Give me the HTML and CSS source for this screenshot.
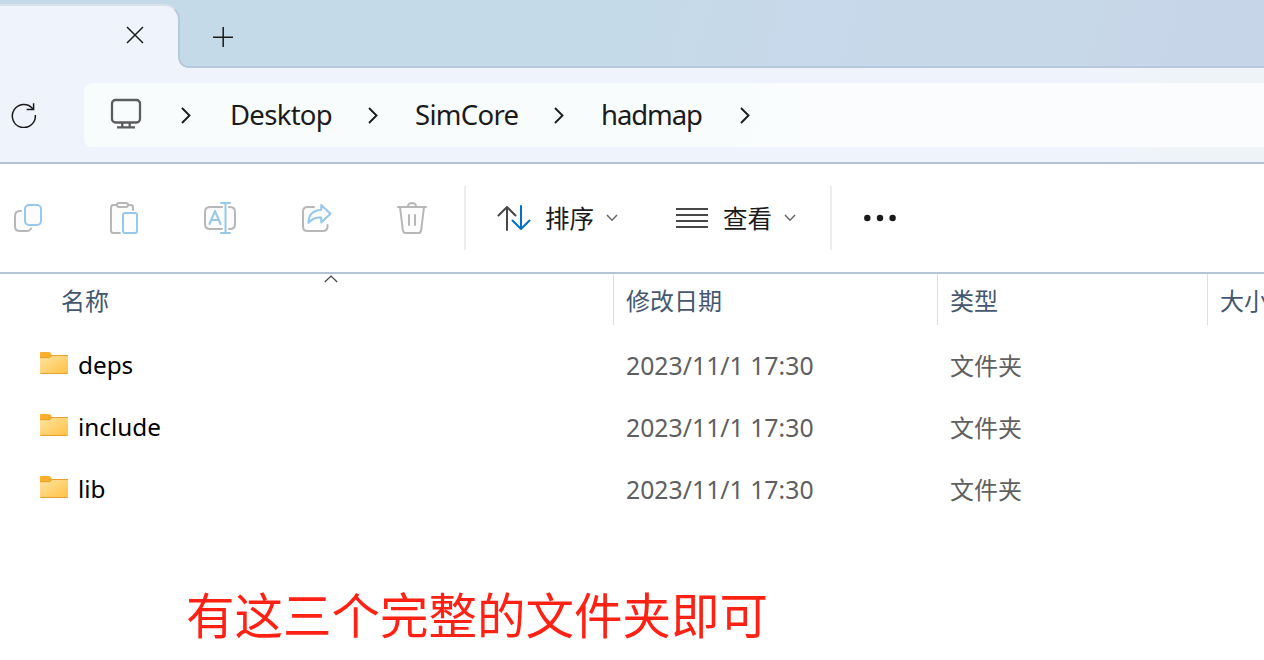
FILE: index.html
```html
<!DOCTYPE html>
<html lang="zh-CN">
<head>
<meta charset="utf-8">
<title>hadmap</title>
<link rel="stylesheet" href="styles.css">
</head>
<body>
<div class="window">
  <header class="tabs">
    <div class="tab">
      <svg class="tab-close" width="18" height="18" viewBox="0 0 18 18"><path d="M1 1 17 17M17 1 1 17"/></svg>
    </div>
    <div class="tabs-rest">
      <svg class="tab-new" width="20" height="20" viewBox="0 0 20 20"><path d="M0 10.2H20M10.2 0V20"/></svg>
    </div>
  </header>

  <nav class="nav">
    <svg class="refresh" width="26" height="26" viewBox="0 0 26 26"><path d="M24.3 13A11.5 11.5 0 1 1 21.7 6.7M22.6 1.2V7.6H15.6"/></svg>
    <div class="address">
      <svg class="monitor" width="32" height="32" viewBox="0 0 32 32"><rect x="2" y="2" width="28" height="22.5" rx="3.5"/><path d="M12.3 25V29M19.7 25V29M7 29.3H25"/></svg>
      <svg class="sep sep-first" width="10" height="17" viewBox="0 0 10 17"><path d="M1 1 8.5 8.5 1 16"/></svg>
      <span class="crumb crumb-desktop">Desktop</span>
      <svg class="sep" width="10" height="17" viewBox="0 0 10 17"><path d="M1 1 8.5 8.5 1 16"/></svg>
      <span class="crumb crumb-simcore">SimCore</span>
      <svg class="sep" width="10" height="17" viewBox="0 0 10 17"><path d="M1 1 8.5 8.5 1 16"/></svg>
      <span class="crumb crumb-hadmap">hadmap</span>
      <svg class="sep" width="10" height="17" viewBox="0 0 10 17"><path d="M1 1 8.5 8.5 1 16"/></svg>
    </div>
  </nav>

  <div class="toolbar">
    <div class="actions">
      <svg class="tool" width="36" height="36" viewBox="0 0 36 36"><path class="gray" d="M11 11H10Q5 11 5 16V26.500Q5 31 10 31H17Q20 31 21 28.500"/><rect class="blue" x="15" y="5" width="16" height="20" rx="4"/></svg>
      <svg class="tool" width="36" height="36" viewBox="0 0 36 36"><path class="gray" d="M13 5H7.500Q5 5 5 7.500V30.500Q5 33 7.500 33H14M22 5H25Q27 5 27 7.500V10"/><rect class="gray" x="11" y="3" width="11" height="4" rx="2"/><rect class="blue" x="17" y="13" width="14" height="20" rx="2"/></svg>
      <svg class="tool" width="36" height="36" viewBox="0 0 36 36"><path class="gray" d="M20 7H8Q3 7 3 12V24Q3 29 8 29H20M27 7H28Q33 7 33 12V24Q33 29 28 29H27"/><path class="blue" d="M19 3H28M19 33H28M23.500 3V33M7.500 24 13 11 18.500 24M9.500 20H16.500"/></svg>
      <svg class="tool" width="36" height="36" viewBox="0 0 36 36"><path class="gray" d="M16 7H9.500Q5 7 5 11.500V26.500Q5 31 9.500 31H24.500Q29.500 31 29.500 26.500V25"/><path class="blue" d="M23.200 5 32.500 13.800 23.200 22.500V17.500Q15 17 10.500 23Q10.500 10.500 23.200 10Z"/></svg>
      <svg class="tool" width="36" height="36" viewBox="0 0 36 36"><path class="gray" d="M4 7H32M13.700 7Q14.200 3 18 3T22.300 7M6 7 8.800 30Q9.200 33 11.500 33H24.500Q26.800 33 27.200 30L30 7M15 15V25M21 15V25"/></svg>
    </div>
    <i class="divider"></i>
    <div class="menu sort">
      <svg class="menu-icon" width="34" height="26" viewBox="0 0 34 26"><path class="dark" d="M10 25V2M1.500 10.500 10 2 18.500 10.500"/><path class="accent" d="M24 1V24M15.500 15.500 24 24 32.500 15.500"/></svg>
      <span class="menu-label">排序</span>
      <svg class="caret" width="12" height="8" viewBox="0 0 12 8"><path d="M1 1 6 6.200 11 1"/></svg>
    </div>
    <div class="menu view">
      <svg class="menu-icon" width="32" height="22" viewBox="0 0 32 22"><path class="dark flat" d="M0 2H32M0 8H32M0 14H32M0 20H32"/></svg>
      <span class="menu-label">查看</span>
      <svg class="caret" width="12" height="8" viewBox="0 0 12 8"><path d="M1 1 6 6.200 11 1"/></svg>
    </div>
    <i class="divider"></i>
    <svg class="more" width="32" height="8" viewBox="0 0 32 8"><circle cx="3.300" cy="4" r="3.200"/><circle cx="16" cy="4" r="3.200"/><circle cx="28.600" cy="4" r="3.200"/></svg>
  </div>

  <main class="files">
    <div class="head">
      <div class="cell name-head">名称
        <svg class="sort-mark" width="14" height="8" viewBox="0 0 14 8"><path d="M.8 7 7 1 13.200 7"/></svg>
      </div>
      <div class="cell">修改日期</div>
      <div class="cell">类型</div>
      <div class="cell">大小</div>
    </div>
    <div class="row">
      <div class="name"><svg class="folder" width="28" height="22" viewBox="0 0 28 22"><defs><linearGradient id="fold" x1="0" y1="0" x2="1" y2="1"><stop offset="0" stop-color="#ffe4a0"/><stop offset="1" stop-color="#ffc043"/></linearGradient></defs><path fill="#fbaf2c" d="M0 1Q0 0 1 0H9Q10.500 0 12 3H27Q28 3 28 4V8H0Z"/><path fill="url(#fold)" d="M0 6H9.500L12 4H28V21Q28 22 27 22H1Q0 22 0 21Z"/><path fill="none" stroke="#e9a02c" d="M0 5.700H9.500L12 3.500H28M.5 21.500H27.500"/></svg><span>deps</span></div>
      <div class="date">2023/11/1 17:30</div><div class="kind">文件夹</div>
    </div>
    <div class="row">
      <div class="name"><svg class="folder" width="28" height="22" viewBox="0 0 28 22"><path fill="#fbaf2c" d="M0 1Q0 0 1 0H9Q10.500 0 12 3H27Q28 3 28 4V8H0Z"/><path fill="url(#fold)" d="M0 6H9.500L12 4H28V21Q28 22 27 22H1Q0 22 0 21Z"/><path fill="none" stroke="#e9a02c" d="M0 5.700H9.500L12 3.500H28M.5 21.500H27.500"/></svg><span>include</span></div>
      <div class="date">2023/11/1 17:30</div><div class="kind">文件夹</div>
    </div>
    <div class="row">
      <div class="name"><svg class="folder" width="28" height="22" viewBox="0 0 28 22"><path fill="#fbaf2c" d="M0 1Q0 0 1 0H9Q10.500 0 12 3H27Q28 3 28 4V8H0Z"/><path fill="url(#fold)" d="M0 6H9.500L12 4H28V21Q28 22 27 22H1Q0 22 0 21Z"/><path fill="none" stroke="#e9a02c" d="M0 5.700H9.500L12 3.500H28M.5 21.500H27.500"/></svg><span>lib</span></div>
      <div class="date">2023/11/1 17:30</div><div class="kind">文件夹</div>
    </div>
  </main>
  <p class="note">有这三个完整的文件夹即可</p>
</div>
</body>
</html>
```
FILE: styles.css
```css
* { box-sizing: border-box; }
body {
  margin: 0;
  background: #fff;
  font-family: "Noto Sans", "Noto Sans CJK SC", sans-serif;
}
svg { display: block; flex: none; fill: none; }
.window { width: 1264px; height: 660px; overflow: hidden; }

.tabs {
  display: flex;
  height: 68px;
  background: linear-gradient(105deg, #c4dae8 45%, #c7d8ea 68%, #c7d8e8 84%, #c7d5e9 94%);
}
.tab {
  position: relative;
  width: 180px;
  margin-top: 4px;
  padding: 20px 0 0 126px;
  background: #eff3fb;
  border-top: 2px solid #d9e1e9;
  border-right: 2px solid #b6cad9;
  border-top-right-radius: 16px;
}
.tab::after {
  content: "";
  position: absolute;
  right: -10px;
  bottom: 0;
  width: 10px;
  height: 10px;
  background: radial-gradient(circle at 10px 0, transparent 7.5px, #b6cad9 8px 9.500px, #eff3fb 10px);
}
.tab-close, .tab-new { stroke: #1b1b1b; stroke-width: 1.5; }
.tabs-rest { flex: 1; padding: 27px 0 0 33px; border-bottom: 2px solid #b6c9da; }

.nav {
  display: flex;
  align-items: center;
  height: 96px;
  padding: 0 0 0 11px;
  background: linear-gradient(90deg, #eff3fb 88%, #eef3f8 95%);
  border-bottom: 2px solid #b5c4d5;
}
.refresh { stroke: #1b1b1b; stroke-width: 1.500; }
.address {
  display: flex;
  align-items: center;
  flex: 1;
  height: 64px;
  margin-left: 47px;
  padding-left: 26px;
  background: linear-gradient(100deg, #f9fcfd 55%, #fbfcfe 68%);
  border-radius: 8px 0 0 8px;
}
.monitor { margin-top: -2px; stroke: #5c5c5c; stroke-width: 2.300; }
.sep { stroke: #1b1b1b; stroke-width: 1.900; }
.sep-first { margin-left: 39px; }
.crumb { font-size: 27.500px; line-height: 38px; color: #1b1b1b; white-space: nowrap; }
.crumb-desktop { width: 138px; margin-left: 39px; letter-spacing: -0.700px; }
.crumb-simcore { width: 139px; margin-left: 37px; letter-spacing: -0.700px; }
.crumb-hadmap { width: 139px; margin-left: 37px; letter-spacing: -1.100px; }

.toolbar {
  display: flex;
  align-items: center;
  height: 110px;
  border-bottom: 2px solid #b5c4d5;
}
.actions { display: flex; gap: 60px; margin-left: 10px; }
.tool { stroke-width: 2; fill: #fcfcfc; stroke-linecap: round; stroke-linejoin: round; }
.gray { stroke: #b7b7b7; }
.blue { stroke: #96c8eb; }
.dark { stroke: #474747; }
.accent { stroke: #0070cc; }
.divider { width: 2px; height: 64px; background: #ededed; }
.actions + .divider { margin-left: 34px; }
.menu { display: flex; align-items: center; }
.menu-icon { stroke-width: 2; stroke-linecap: round; stroke-linejoin: round; }
.flat { stroke-linecap: butt; }
.menu-label { padding-top: 2px; margin-left: 14px; font-size: 24.500px; line-height: 36px; color: #1b1b1b; }
.caret { margin-left: 12px; stroke: #666; stroke-width: 1.500; }
.sort { margin-left: 31px; }
.view { margin-left: 58px; }
.view .menu-label { margin-left: 15px; }
.view + .divider { margin-left: 34px; }
.more { margin-left: 32px; fill: #1b1b1b; }

.head, .row { display: grid; grid-template-columns: 613px 324px 270px 57px; }
.head { height: 51px; margin-bottom: 9px; color: #44576f; font-size: 24px; line-height: 53px; }
.cell { padding-left: 12px; border-left: 1px solid #dedede; white-space: nowrap; overflow: hidden; }
.name-head { display: flex; padding-left: 61px; border-left: 0; }
.sort-mark { margin: 1px 0 0 215px; stroke: #444; stroke-width: 1.200; }
.row { height: 62px; align-items: center; font-size: 24px; line-height: 36px; }
.name { display: flex; align-items: center; gap: 10px; padding-left: 40px; color: #000; font-size: 24.300px; }
.folder { margin-top: -4px; }
.date, .kind { padding-left: 13px; color: #5f5f5f; white-space: nowrap; }
.date { font-size: 24.800px; }
.kind { padding-top: 1px; }
.note { margin: 59px 0 0 186px; color: #ff2114; font-size: 48.500px; line-height: 72px; white-space: nowrap; }
```
